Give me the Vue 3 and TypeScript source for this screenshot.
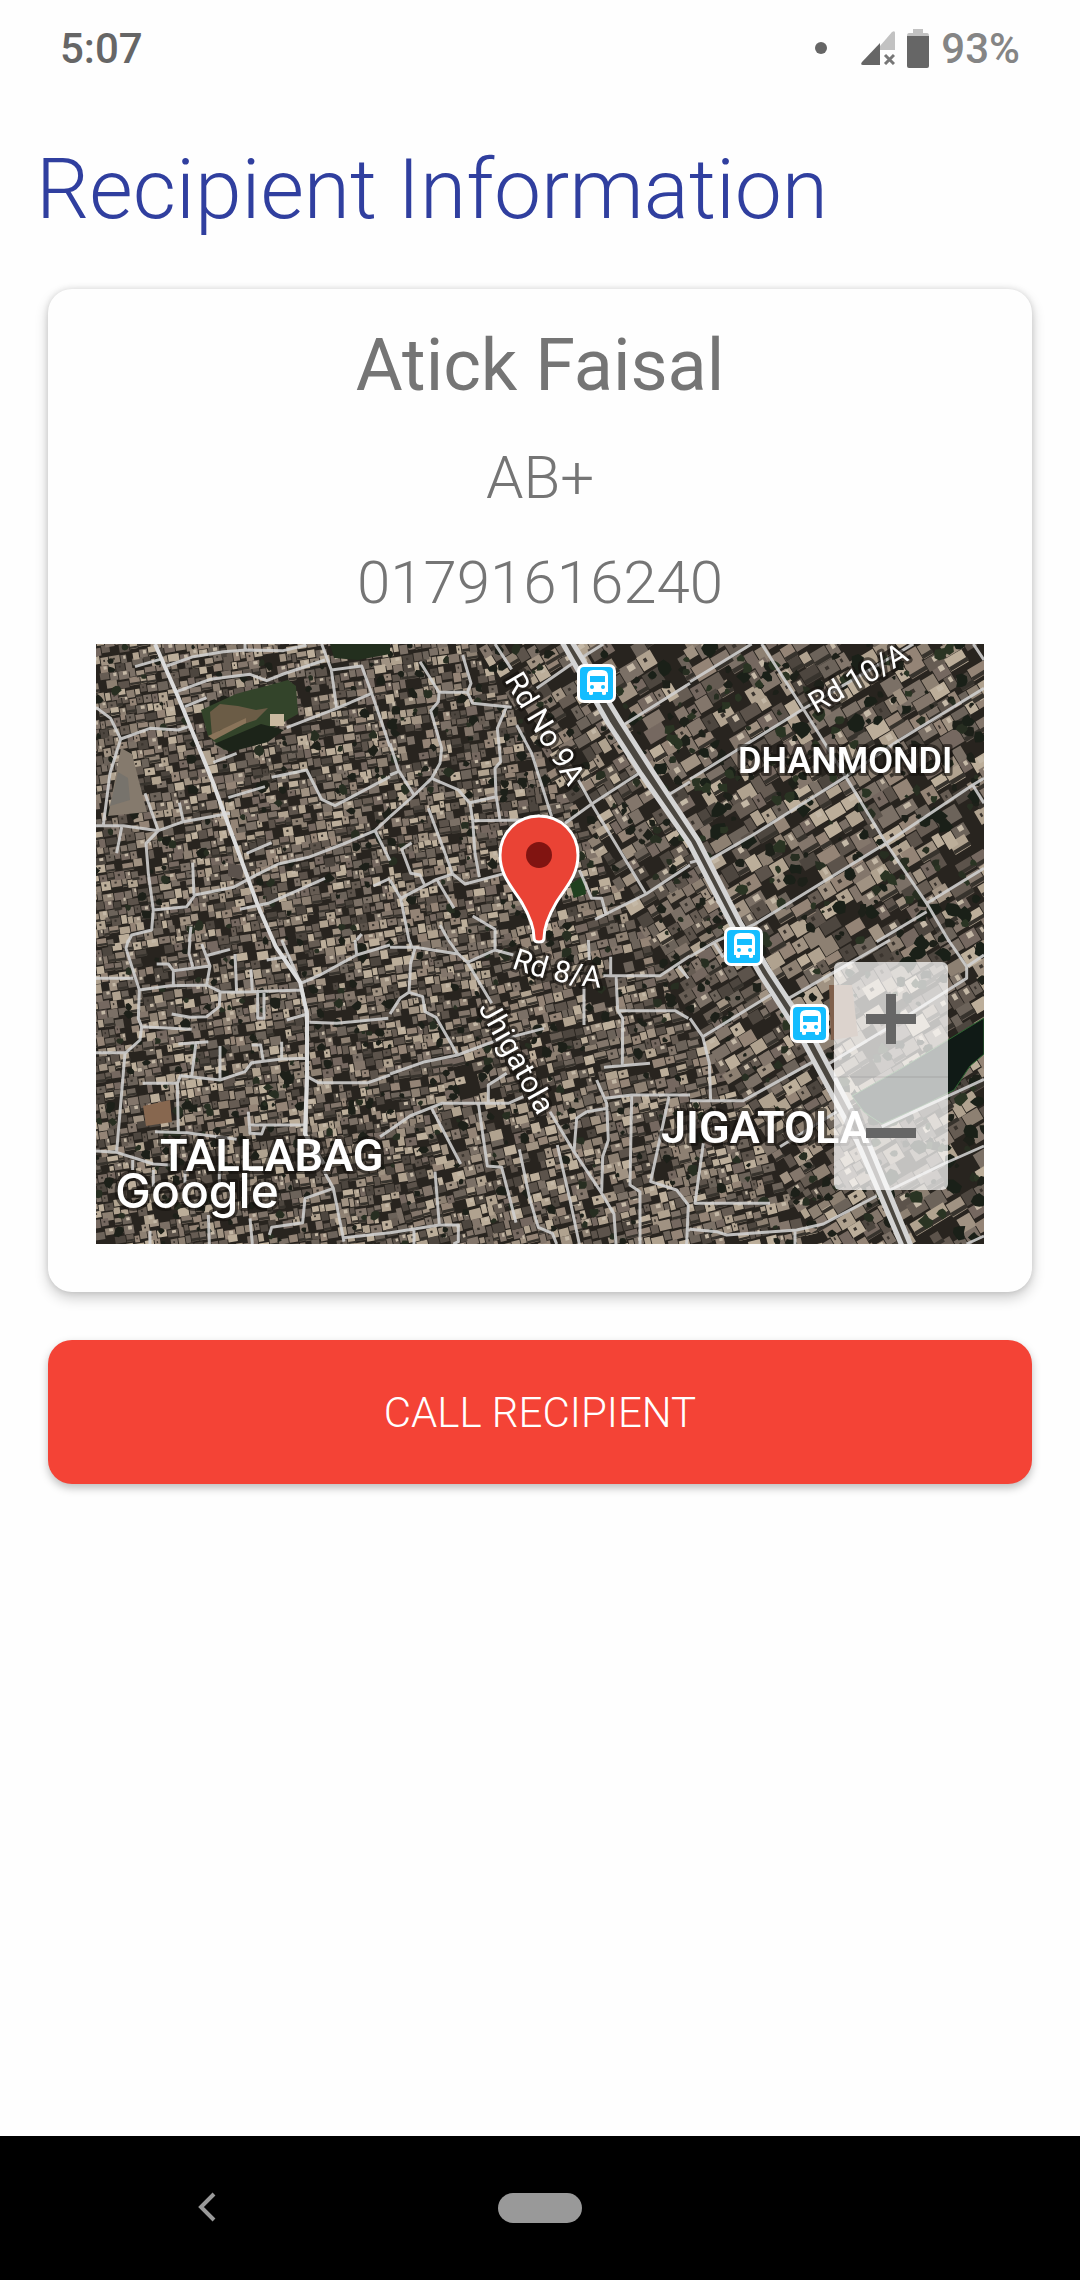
<script setup lang="ts">
interface Recipient {
  name: string
  bloodGroup: string
  phone: string
}

interface Layer {
  color: string
  d: string
}

interface Sheet {
  x: number
  y: number
  roads: string
}

const recipient: Recipient = {
  name: 'Atick Faisal',
  bloodGroup: 'AB+',
  phone: '01791616240',
}

// Small seeded generator, so the roofs fall in the same place on every render.
let seed = 20719
function rand(): number {
  seed = (seed * 1664525 + 1013904223) % 4294967296
  return seed / 4294967296
}

const roofColors = [
  '#8d8072', '#7b7066', '#a09282', '#6c635a', '#b0a28f', '#5c534b',
  '#948476', '#756860', '#665c53', '#bcae9a', '#83766b', '#4d463f',
]

function district(angle: number, cell: number, inside: (x: number, y: number) => boolean): Layer[] {
  const paths: string[] = roofColors.map(() => '')
  const details: string[] = ['', '', '']
  const a = (angle * Math.PI) / 180
  const cos = Math.cos(a)
  const sin = Math.sin(a)
  const at = (u: number, v: number): [number, number] => [
    444 + u * cos - v * sin,
    300 + u * sin + v * cos,
  ]
  const quad = (u: number, v: number, w: number, h: number): string => {
    const pts = [at(u, v), at(u + w, v), at(u + w, v + h), at(u, v + h)]
    return 'M' + pts.map(([x, y]) => `${x.toFixed(1)} ${y.toFixed(1)}`).join('L') + 'Z'
  }
  for (let v = -560; v < 560; v += cell) {
    let u = -560 - rand() * cell
    while (u < 560) {
      const w = cell * (0.55 + rand() * 0.8)
      const h = cell * (0.72 + rand() * 0.3)
      const dv = (rand() - 0.5) * cell * 0.5
      const [cx, cy] = at(u, v)
      const pick = Math.floor(rand() * roofColors.length)
      const keep = rand() > 0.12
      const detail = rand()
      if (inside(cx, cy) && cx > -20 && cx < 908 && cy > -20 && cy < 620 && keep) {
        paths[pick] += quad(u, v + dv, w - 0.9, h)
        if (detail > 0.8) {
          details[0] += quad(u + w * 0.3, v + dv + h * 0.3, w * 0.2, h * 0.25)
        } else if (detail < 0.18) {
          details[1] += quad(u + w * 0.4, v + dv + h * 0.1, w * 0.35, h * 0.4)
        } else if (detail < 0.42) {
          details[2] += quad(u, v + dv + h * 0.65, w, h * 0.3)
        }
      }
      u += w
    }
  }
  return [
    ...paths.map((d, i) => ({ color: roofColors[i], d })),
    { color: '#3a342e', d: details[0] },
    { color: '#c4b8a6', d: details[1] },
    { color: '#37332d', d: details[2] },
  ]
}

const avenue = (y: number): number => 467 + y * 0.57

const roofs: Layer[] = [
  ...district(-9, 9, (x, y) => x < avenue(y) - 90 && x + y * 0.4 < 520),
  ...district(-14, 10, (x, y) => x < avenue(y) - 90 && x + y * 0.4 >= 520),
  ...district(-31, 13, (x, y) => x >= avenue(y) - 90 && x < avenue(y) + 12),
  ...district(-31, 16, (x, y) => x >= avenue(y) + 12),
]

function blobs(count: number, min: number, max: number, inside: (x: number, y: number) => boolean): string {
  let d = ''
  for (let i = 0; i < count; i++) {
    const x = rand() * 888
    const y = rand() * 600
    const r = min + rand() * (max - min)
    if (!inside(x, y)) continue
    let ring = ''
    for (let k = 0; k < 8; k++) {
      const t = (k / 8) * Math.PI * 2
      const q = r * (0.6 + rand() * 0.6)
      ring += `${k ? 'L' : 'M'}${(x + Math.cos(t) * q).toFixed(1)} ${(y + Math.sin(t) * q).toFixed(1)}`
    }
    d += ring + 'Z'
  }
  return d
}

const greens: Layer[] = [
  { color: '#1d2019', d: blobs(560, 2, 6, () => true) },
  { color: '#272e21', d: blobs(260, 2, 6, () => true) },
  { color: '#1a2018', d: blobs(260, 4, 9, (x, y) => x > avenue(y)) },
  { color: '#2a3423', d: blobs(240, 3, 7, (x, y) => x > avenue(y)) },
]

// Side streets, drawn per survey sheet in thirds of a pixel.
const sheets: Sheet[] = [
  {
    x: -6,
    y: -4,
    roads:
      'M18 202L62 235L92 297L180 265L265 270L305 257M92 297L60 400L40 555M18 557H100L205 572L280 545L420 520M135 80L210 58M230 78L310 50L400 35L470 30L580 32L650 15M465 10V30M260 155L360 118L480 103L530 122L580 102L705 60M285 200L350 173M695 12L724 90L740 205M724 90L815 78L845 160L900 320M590 263L740 205L845 160M370 367L440 340M415 473L525 440M545 412L650 390L695 478L735 497L900 410M165 460L205 572L168 610L175 700L190 810L185 870L125 885L115 905M268 488L280 545M95 562L80 640M190 810L290 800L315 765L430 742L495 707L565 672L655 652L760 612L855 572L900 530M855 572L900 662M308 668L312 765M470 640L545 608M450 808L535 790L705 715M850 738L900 715M303 860L298 905M800 900L815 882',
  },
  {
    x: 294,
    y: -4,
    roads:
      'M90 65L147 157L145 185L122 212L155 325L150 370L125 415L70 468L0 530M147 157H232L248 190L365 202M218 45L243 130L232 157M350 200L322 265L332 365L315 385L318 465L330 540M315 12L365 88M380 255L425 340L485 530M440 145L545 72L640 12M0 310L25 390L72 465M0 405L25 395M125 415L205 450L240 490L248 542L255 640L268 712M240 488L318 470M248 542L400 540M115 505L165 640L188 702L225 732L345 700M65 608L35 628L62 700L90 705L105 738M0 720L32 775L58 905M32 775L140 718L188 702M140 718L192 805M150 855L175 900M248 828L315 868V900M525 550L605 492L775 382M565 420L605 492L768 762M568 690L605 775H635L648 822M615 838L648 822L768 762L900 675M705 252L900 130M830 468L900 425',
  },
  {
    x: 594,
    y: -4,
    roads:
      'M0 125L185 12M0 418L340 207L670 12M50 665L180 590L460 415L620 305L882 145M215 12L340 207L470 415L588 610L710 790L778 905M75 905L190 855L588 610L848 435L882 415M848 435L882 490M710 790L882 685M560 905L710 815M850 12L882 60M80 788L115 765M0 668L45 655',
  },
  {
    x: -6,
    y: 296,
    roads:
      'M115 0L108 25L148 150L145 235L155 260L150 300L105 340L80 635M18 115H130M18 338H105M148 150L240 137L350 135L390 155L440 157L635 150M390 155L388 200L350 230L300 232L245 222M300 0L297 40L308 80M335 12L360 78L350 135M345 48L420 28M200 72H235L250 92V137M250 92L360 78M435 42L440 157M483 88L487 155M503 155V235H522V155M155 260L305 268M265 312L355 305M318 308L305 410M390 318V420M158 430H262L272 407L390 420L465 395L485 368L575 357L650 355M485 315H512L520 365M575 305V357M262 430L265 580M530 60L590 50M575 0L632 130L652 220L652 410L648 590M632 130L690 105L800 45L900 15M795 0L800 45M590 240L652 222M658 247L740 250L895 235M652 410L685 428H835L900 405M475 515L480 580L515 582L525 555M475 555H648M195 575L290 578L440 598M18 633L80 637L190 672L240 675M128 660V690M870 590L900 570M700 690L730 745L762 905M730 745L645 775L638 848L545 862L538 885M762 893L900 878M355 825L358 912M480 835L487 912M190 690V740M285 690V730M388 690V730M180 872V912',
  },
  {
    x: 294,
    y: 296,
    roads:
      'M0 22H75L205 42L232 67L305 190M58 0L65 20M175 0L205 42M232 67L315 30V0M315 30L370 45M75 25L62 70L57 157L98 170L105 215L138 232L203 345M57 157L30 175L0 222M0 402L105 365L203 345L310 305L462 265M295 490V435L350 400M0 570L60 528L155 490H355L400 470M125 505L212 672M265 490L292 678L335 682L378 848M480 515L552 635L632 755L672 822L678 912M552 635L560 535L590 515L650 505M620 420L650 490L655 600L638 650L635 755M388 628L420 780L445 862L487 880L500 912M502 615L540 780L568 912M595 0L598 60M662 50V105M640 107H810L900 48M865 78L895 115M582 140V255M678 105L683 212L698 235L697 380M683 212H855L895 235M642 382L780 370M645 475L725 465H900M725 465L720 735L750 755V912M837 470L782 725L860 750L895 795L890 912M890 870H900M135 695L148 855M0 878L148 855H205V905L190 912M72 870V912',
  },
  {
    x: 594,
    y: 296,
    roads:
      'M0 50L75 5M70 5L100 52M0 235L38 290L58 370L62 485M0 482H160L370 365M38 290L250 160M270 190L400 115L600 0M410 375L600 260L830 115V80L882 45M830 80L775 0M575 560L770 470L882 418M600 750L760 672L882 618M560 768L400 852L320 870L110 885L80 875L0 868M315 870V912M40 610L15 790H240M830 912L882 888M270 620L440 515',
  },
]

const westRoad = 'M59 0L83 55L116 136L138 196L162 262L180 303L204 338L211 370V430L209 490L228 520'

const stops = [
  { x: 481, y: 20 },
  { x: 628, y: 283 },
  { x: 694, y: 360 },
]
</script>

<template>
  <div class="screen">
    <header class="status">
      <span class="clock">5:07</span>
      <div class="indicators">
        <span class="notice"></span>
        <svg class="signal" viewBox="0 0 34 34" aria-label="No mobile data">
          <path d="M34 2V19H19V15L31 1Q34-1 34 2Z" fill="#c2c2c2" />
          <path d="M19 12V34H2Q-1 34 1 31Z" fill="#666" />
          <path d="M24 24L33 33M33 24L24 33" stroke="#777" stroke-width="3" />
        </svg>
        <svg class="battery" viewBox="0 0 22 39" aria-label="Battery">
          <path d="M6 0H16V4H20Q22 4 22 7H0Q0 4 2 4H6Z" fill="#c2c2c2" />
          <path d="M0 7H22V37Q22 39 20 39H2Q0 39 0 37Z" fill="#666" />
        </svg>
        <span class="percent">93%</span>
      </div>
    </header>

    <main class="content">
      <h1 class="title">Recipient Information</h1>

      <section class="card">
        <h2 class="name">{{ recipient.name }}</h2>
        <p class="detail">{{ recipient.bloodGroup }}</p>
        <p class="detail">{{ recipient.phone }}</p>

        <div class="map">
          <svg class="imagery" viewBox="0 0 888 600" preserveAspectRatio="xMidYMid slice">
            <rect width="888" height="600" fill="#28241f" />
            <path v-for="(layer, i) in roofs" :key="'r' + i" :d="layer.d" :fill="layer.color" />
            <path v-for="(layer, i) in greens" :key="'g' + i" :d="layer.d" :fill="layer.color" />

            <path d="M105 66L140 50L192 36L200 42L202 70L170 88L128 106L112 92Z" fill="#33442a" />
            <path d="M114 68L124 60L142 62L160 66L172 64L160 76L142 82L124 86L116 92Z" fill="#6b5c46" />
            <path d="M112 92L150 74L150 79L118 96Z" fill="#8a745a" />
            <path d="M118 100L165 80L188 86L172 98L134 108Z" fill="#1c2419" />
            <rect x="174" y="70" width="14" height="12" fill="#c9b9a0" />
            <path d="M234 0H294V10L262 16L238 14Z" fill="#232f1e" />
            <path d="M25 104L36 110L51 168L12 172Z" fill="#857a6d" />
            <path d="M22 128L32 134L34 156L14 162Z" fill="#77736c" />
            <path d="M47 462L74 456L76 478L50 482Z" fill="#87674f" />
            <path d="M733 341H756L762 392L735 396Z" fill="#80604c" />
            <path d="M132 219L148 222L146 236L132 232Z" fill="#5b524c" />
            <path d="M756 452L768 468L786 480L826 462L858 446L874 422L888 410V374L852 396L806 424Z" fill="#101a16" stroke="#2c6631" stroke-width="1" />
            <path d="M474 240L488 232L490 250L478 254Z" fill="#20401f" />

            <g class="roads">
              <path
                v-for="(sheet, i) in sheets"
                :key="'s' + i"
                :transform="`translate(${sheet.x} ${sheet.y}) scale(0.33333)`"
                :d="sheet.roads"
              />
            </g>
            <path class="main-road" :d="westRoad" />
            <path d="M471 -2L519 79L551 129L598 197L640 279L669 329L713 396L766 496L811 602" fill="none" stroke="#4b4740" stroke-width="9" />
            <path class="avenue" d="M466 -2L512 79L545 130L593 199L635 280L664 330L707 397L761 497L806 602" />
            <path class="avenue" d="M476 -2L525 78L557 128L602 196L644 278L674 328L718 395L771 495L815 602" />

            <g class="street">
              <text transform="translate(408 36) rotate(59)">Rd No 9A</text>
              <text transform="translate(720 70) rotate(-30)">Rd 10/A</text>
              <path id="curve" d="M415 324Q465 342 513 344" fill="none" />
              <text><textPath href="#curve">Rd 8/A</textPath></text>
              <text transform="translate(382 364) rotate(61)">Jhigatola</text>
            </g>
            <g class="area">
              <text class="small" x="642" y="129">DHANMONDI</text>
              <text x="565" y="499">JIGATOLA</text>
              <text x="64" y="527">TALLABAG</text>
            </g>
            <text class="brand" x="19" y="564">Google</text>

            <g v-for="stop in stops" :key="stop.x" :transform="`translate(${stop.x} ${stop.y})`">
              <rect width="39" height="39" rx="7" fill="#fff" />
              <rect x="3" y="3" width="33" height="33" rx="4" fill="#14bdff" />
              <path d="M10 12Q10 6 16 6H25Q31 6 31 12V28H29V30Q29 31 27 31Q25 31 25 30V28H16V30Q16 31 14 31Q12 31 12 30V28H10Z" fill="#fff" />
              <rect x="13" y="12" width="15" height="6" fill="#14bdff" />
              <circle cx="15" cy="23" r="2" fill="#14bdff" />
              <circle cx="26" cy="23" r="2" fill="#14bdff" />
            </g>

            <path
              d="M404 211C404 189 421 172 443 172S482 189 482 211C482 233 468 245 460 259C453 271 448 282 448 294Q448 298 443 298T438 294C438 282 433 271 426 259C418 245 404 233 404 211Z"
              fill="#ea4335"
              stroke="#fff"
              stroke-width="3"
            />
            <circle cx="443" cy="211" r="13" fill="#811411" />
          </svg>

          <div class="zoom">
            <button type="button" aria-label="Zoom in">
              <svg viewBox="0 0 50 50"><path d="M20 0H30V20H50V30H30V50H20V30H0V20H20Z" fill="#666" /></svg>
            </button>
            <button type="button" aria-label="Zoom out">
              <svg viewBox="0 0 50 50"><path d="M0 20H50V30H0Z" fill="#666" /></svg>
            </button>
          </div>
        </div>
      </section>

      <button type="button" class="call">CALL RECIPIENT</button>
    </main>

    <nav class="system">
      <button type="button" class="back" aria-label="Back">
        <svg viewBox="0 0 18 30"><path d="M16 2L3 15L16 28" fill="none" stroke="#999" stroke-width="4" /></svg>
      </button>
      <button type="button" class="home" aria-label="Home"></button>
      <span></span>
    </nav>
  </div>
</template>

<style>
body {
  margin: 0;
  background: #fefefe;
}
</style>

<style scoped>
.screen {
  display: flex;
  flex-direction: column;
  min-height: 100vh;
  font-family: Roboto, 'Liberation Sans', sans-serif;
  color: #757575;
}

button {
  border: 0;
  padding: 0;
  font-family: inherit;
}

.status {
  display: flex;
  align-items: center;
  justify-content: space-between;
  height: 96px;
  padding: 0 60px;
  font-size: 42px;
  font-weight: 500;
  color: #666;
}

.indicators {
  display: flex;
  align-items: center;
}

.notice {
  width: 12px;
  height: 12px;
  margin-right: 34px;
  border-radius: 50%;
  background: #666;
}

.signal {
  width: 34px;
  height: 34px;
  margin-right: 12px;
}

.battery {
  width: 22px;
  height: 39px;
  margin-right: 12px;
}

.percent {
  font-weight: 500;
  color: #858585;
}

.content {
  padding: 44px 48px 48px;
}

.title {
  margin: 0 -12px 49px;
  font-size: 84px;
  line-height: 100px;
  font-weight: 300;
  color: #303f9f;
}

.card {
  padding: 21px 48px 48px;
  border-radius: 24px;
  background: #fefefe;
  box-shadow: 0 6px 14px rgba(0, 0, 0, 0.2), 0 0 6px rgba(0, 0, 0, 0.12);
  text-align: center;
}

.name {
  margin: 0 0 3px;
  font-size: 72px;
  line-height: 112px;
  font-weight: 400;
}

.detail {
  margin: 0;
  font-size: 60px;
  line-height: 105px;
  font-weight: 300;
}

.map {
  position: relative;
  height: 600px;
  margin-top: 9px;
}

.imagery {
  display: block;
  width: 100%;
  height: 100%;
}

.roads {
  fill: none;
  stroke: #d2d2d2;
  stroke-width: 9px;
  stroke-linejoin: round;
  opacity: 0.88;
}

.main-road {
  fill: none;
  stroke: #dcdcdc;
  stroke-width: 4px;
}

.avenue {
  fill: none;
  stroke: #d4d4d4;
  stroke-width: 5px;
}

.street text,
.area text,
.brand {
  fill: #fff;
  stroke: rgba(20, 17, 14, 0.6);
  stroke-width: 6px;
  stroke-linejoin: round;
  paint-order: stroke;
}

.street text {
  font-size: 30px;
}

.area text {
  font-size: 45px;
  font-weight: 600;
}

.area .small {
  font-size: 36px;
}

.brand {
  font-family: Inter, 'Liberation Sans', sans-serif;
  font-size: 48px;
  font-weight: 500;
}

.zoom {
  position: absolute;
  right: 36px;
  bottom: 54px;
  display: flex;
  flex-direction: column;
  width: 114px;
  border-radius: 6px;
  overflow: hidden;
}

.zoom button {
  display: grid;
  place-items: center;
  height: 114px;
  background: rgba(255, 255, 255, 0.72);
}

.zoom button + button {
  box-shadow: inset 0 2px rgba(0, 0, 0, 0.06);
}

.zoom svg {
  width: 50px;
  height: 50px;
}

.call {
  display: block;
  width: 100%;
  height: 144px;
  margin-top: 48px;
  border-radius: 24px;
  background: #f44336;
  box-shadow: 0 4px 8px rgba(0, 0, 0, 0.26);
  color: #fff;
  font-size: 42px;
  font-weight: 300;
}

.system {
  display: grid;
  grid-template-columns: 1fr 84px 1fr;
  align-items: center;
  height: 144px;
  margin-top: auto;
  background: #000;
}

.back {
  justify-self: center;
  width: 90px;
  height: 90px;
  margin-right: 84px;
  background: none;
}

.back svg {
  width: 18px;
  height: 30px;
}

.home {
  height: 30px;
  border-radius: 15px;
  background: #999;
}
</style>
